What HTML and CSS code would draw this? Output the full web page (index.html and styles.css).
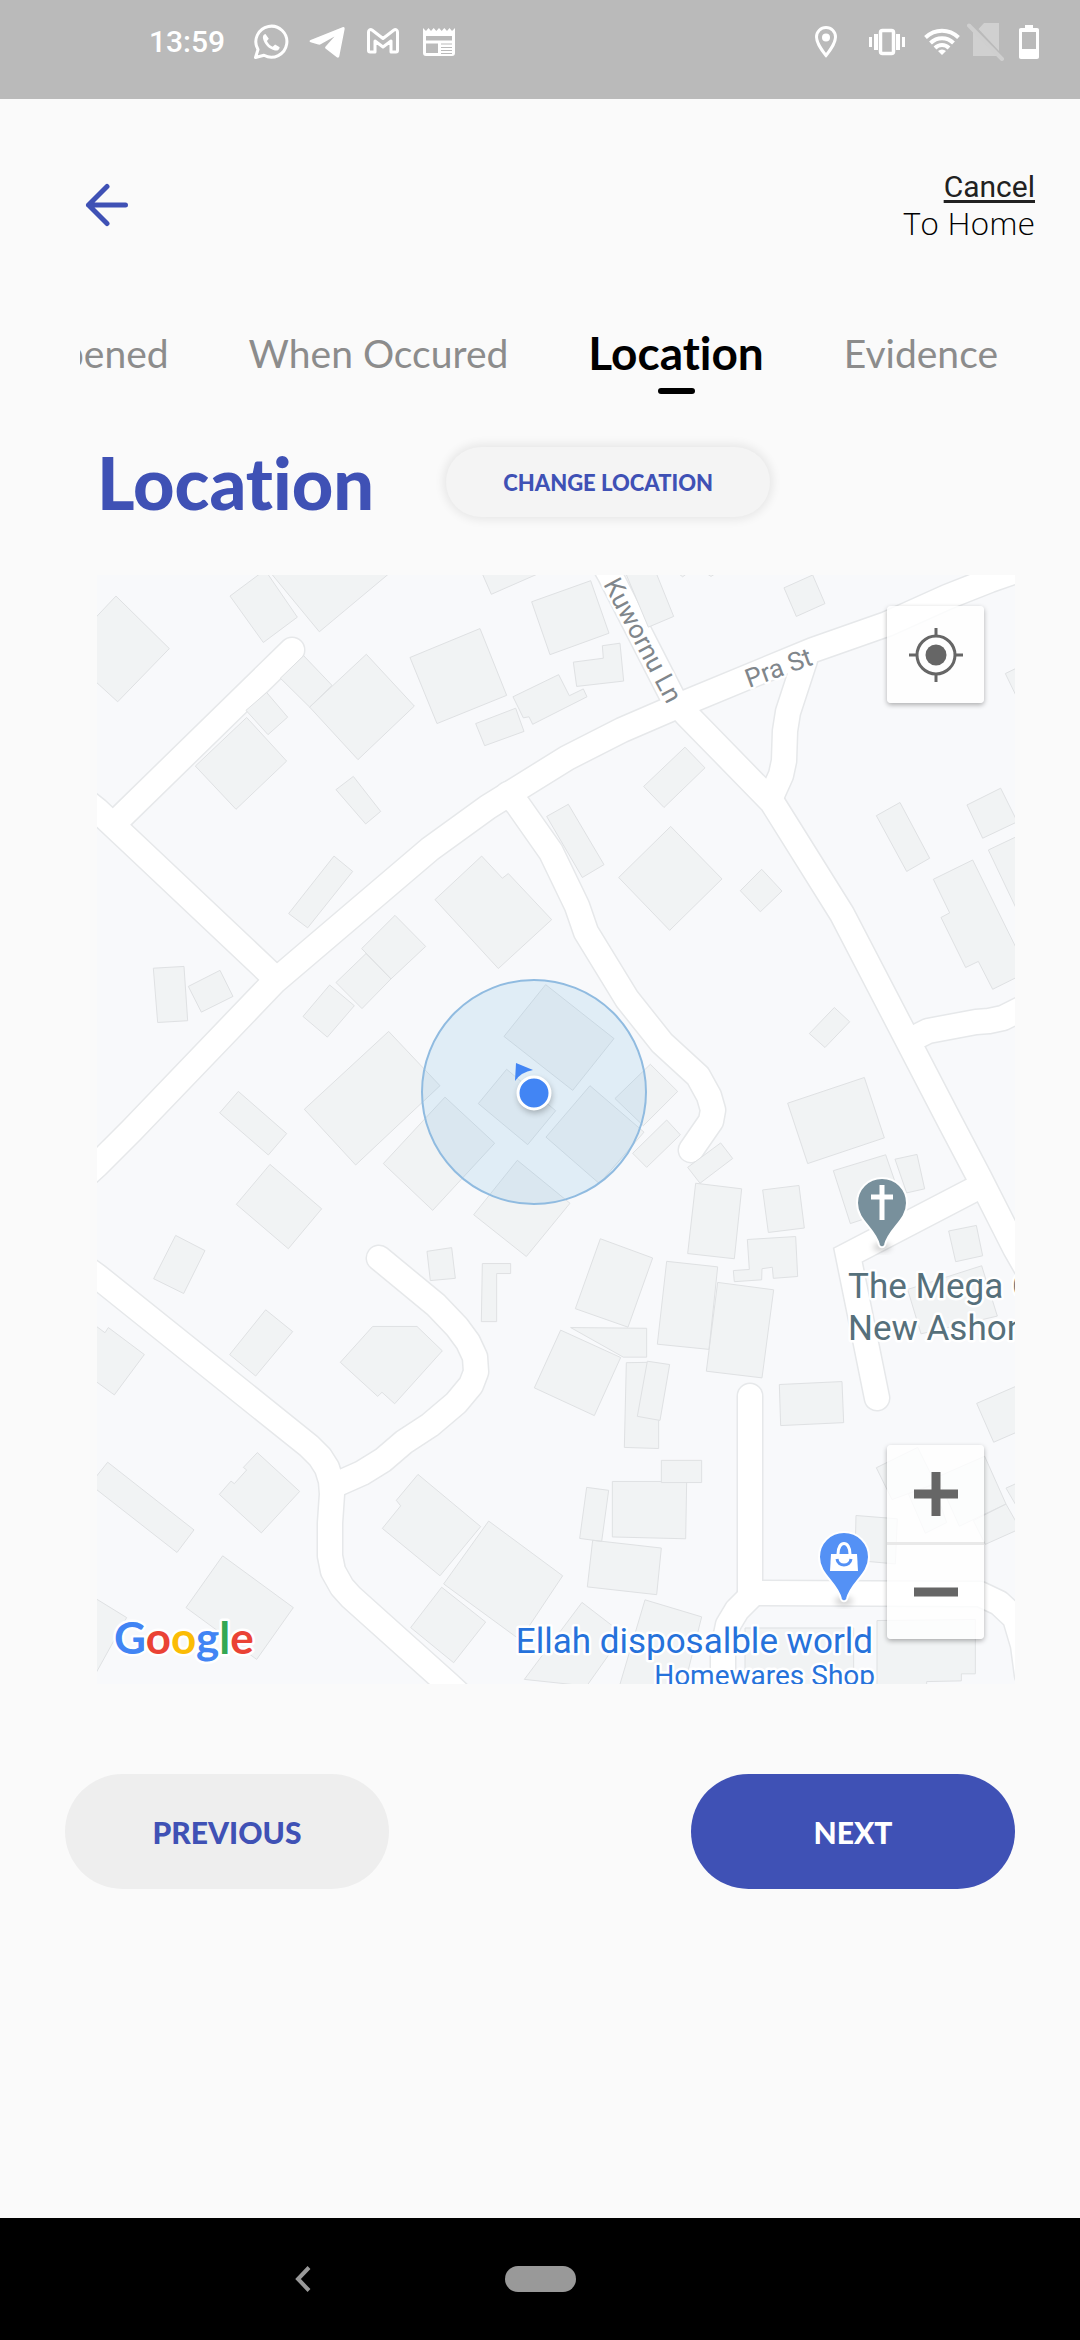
FILE: index.html
```html
<!DOCTYPE html>
<html lang="en">
<head>
<meta charset="utf-8">
<meta name="viewport" content="width=device-width, initial-scale=1">
<title>Location</title>
<link rel="stylesheet" href="styles.css">
</head>
<body>
<header class="status">
  <div class="status-group">
    <time class="clock">13:59</time>
    <svg class="status-icon" viewBox="0 0 36 36" width="36" height="36" fill="none" stroke="#fff" stroke-width="3">
      <path d="M2.500 33.500 5 25.500A15.500 15.500 0 1 1 11 31.300Z" stroke-linejoin="round"/>
      <path d="M12.500 10c-2 .5-3 2.300-2.500 4.500 1.500 6 6 10.500 12 12 2.500.5 4.300-.8 4.700-3.300l-4.600-2.600-2.400 2.200c-2.600-1.300-4.600-3.200-5.800-5.800l1.900-2.200Z" fill="#fff" stroke="none"/>
    </svg>
    <svg class="status-icon" viewBox="0 0 36 36" width="36" height="36" fill="#fff">
      <path d="M33.500 3.200 1.600 15.900c-1.400.6-1.400 1.800 0 2.300l7.600 2.300c1 .3 2 .1 2.900-.5L25.500 12.500 16.600 22.400c-.7.8-.7 1.600.2 2.300l11 8.600c1.200.9 2.200.4 2.500-1L35.600 5.200c.3-1.700-.6-2.600-2.100-2Z"/>
    </svg>
    <svg class="status-icon" viewBox="0 0 36 36" width="36" height="36" fill="none" stroke="#fff" stroke-width="3" stroke-linejoin="round">
      <path d="M3.500 8v18.500c0 .8.500 1.500 1.500 1.500h5V17l8 6 8-6v11h5c1 0 1.500-.7 1.500-1.500V8c0-2-2-3-3.500-2L18 14.500 7 6C5.500 5 3.500 6 3.500 8Z"/>
    </svg>
    <svg class="status-icon" viewBox="0 0 36 36" width="36" height="36" fill="#fff">
      <path fill-rule="evenodd" d="M2 4l3 3 2.500-3L10 7l2.700-3 2.600 3L18 4l2.700 3 2.600-3L26 7l2.500-3L31 7l3-3v25c0 2-1 3-3 3H5c-2 0-3-1-3-3ZM5 12v4.500h26V12ZM5 19.500V29h12v-9.500ZM20 19.500v1h11v-1ZM20 23v1h11v-1ZM20 26v1h11v-1ZM20 29v1h11v-1Z"/>
    </svg>
  </div>
  <div class="status-group status-right">
    <svg class="icon-pin" viewBox="0 0 22 32" width="22" height="32"><path d="M11 1.500c-5.300 0-9.500 4.200-9.500 9.500C1.500 18 11 29.500 11 29.500S20.500 18 20.500 11c0-5.300-4.200-9.500-9.500-9.500Z" fill="none" stroke="#fff" stroke-width="3"/><circle cx="11" cy="11.500" r="4" fill="#fff"/></svg>
    <svg class="icon-vibrate" viewBox="0 0 36 28" width="36" height="28" fill="#fff"><path d="M0 9h3v10H0ZM5 6h4v16H5ZM27 6h4v16h-4ZM33 9h3v10h-3Z"/><rect x="11.500" y="2.500" width="13" height="23" rx="2" fill="none" stroke="#fff" stroke-width="3.500"/></svg>
    <svg class="icon-wifi" viewBox="0 0 36 28" width="36" height="28" fill="none" stroke="#fff" stroke-width="4"><path d="M1.500 9.500c9.500-9 23.500-9 33 0M6.500 15c6.500-6.500 16.500-6.500 23 0M11 20c4-4 10-4 14 0"/><path d="M14 23c2.500-2 5.500-2 8 0l-4 4Z" fill="#fff" stroke="none"/></svg>
    <svg class="icon-sim" viewBox="0 0 38 38" width="38" height="38"><path d="M17 0h15v28L11.500 6ZM6 8l25 25H6Z" fill="#d0d0d0"/><path d="M2 2.500 35 36" stroke="#cfcfcf" stroke-width="4" stroke-linecap="round"/></svg>
    <svg class="icon-battery" viewBox="0 0 20 34" width="20" height="34"><path fill="#fff" fill-rule="evenodd" d="M6 0h8v3h4c1.300 0 2 .7 2 2v27c0 1.300-.7 2-2 2H2c-1.300 0-2-.7-2-2V5c0-1.300.7-2 2-2h4ZM3 7v17h14V7Z"/></svg>
  </div>
</header>

<main class="screen">
  <div class="topbar">
    <button class="back" type="button" aria-label="Back">
      <svg viewBox="0 0 44 44" width="44" height="44" fill="none" stroke="#3f51b5" stroke-width="5" stroke-linecap="round" stroke-linejoin="round"><path d="M22 3.500 3.500 22 22 40.500M3.500 22h37"/></svg>
    </button>
    <div class="cancel">
      <a class="cancel-link" href="#home">Cancel</a>
      <span class="cancel-note">To Home</span>
    </div>
  </div>

  <nav class="tabs" aria-label="Report steps">
    <a class="tab" href="#what">What Happened</a>
    <a class="tab" href="#when">When Occured</a>
    <a class="tab tab-active" href="#location" aria-current="step">Location</a>
    <a class="tab" href="#evidence">Evidence</a>
  </nav>

  <div class="title-row">
    <h1 class="title">Location</h1>
    <button class="change" type="button">CHANGE LOCATION</button>
  </div>

  <section class="map" aria-label="Map">
    <svg class="map-canvas" viewBox="0 0 918 1109">
      <defs>
        <filter id="soft" x="-50%" y="-50%" width="200%" height="200%"><feGaussianBlur stdDeviation="3"/></filter>
        <g id="roads">
          <path d="M-10 599 0 590 35 555 178 406 333 274 391 232 470 183 525 155 583 130 716 75 790 49 850 22 893 5 930-8"/>
          <path d="M-10 227 0 235 34 267 178 403"/>
          <path d="M195 75 25 241"/>
          <path d="M505-14 513 0 578 127 590 140 675 227 745 339 852 545 882 602 918 673 930 694"/>
          <path d="M708 85 691 137 688 156 687 186 684 200 675 220"/>
          <path d="M411 219 421 230 454 277 480 331 489 357 530 424 565 468 601 501 612 521 616 535 614 546 594 575"/>
          <path d="M823 460 831 456 879 447 892 446 906 443 918 437 930 431"/>
          <path d="M884 611 874 616 751 680 780 823" stroke-linejoin="miter"/>
          <path d="M-10 694 0 701 212 871 223 882 230 893 234 906 235 919 233 948 233 981 236 996 245 1012 254 1022 351 1109 365 1122"/>
          <path d="M282 683 339 730 360 752 371 767 378 782 379 797 374 810 359 828 333 850 307 867 286 885 265 898 238 910"/>
          <path d="M653 821 653 1022 640 1035 631 1050 626 1074 626 1120"/>
          <path d="M653 1018 883 1019 902 1028 918 1043 926 1070 930 1100"/>
        </g>
      </defs>
      <rect width="918" height="1109" fill="#f8f9fb"/>
      <use href="#roads" class="road-edge"/>
      <use href="#roads" class="road"/>

      <g class="buildings">
        <g transform="translate(-7 -5) scale(.33333 .35714)">
          <path d="M0 150 78 73 238 220 83 369 0 298ZM420 73 525 0 622 132 520 203ZM535 0 688 173 910 0ZM571 303 641 240 726 323 659 384ZM659 384 829 236 973 381 804 531ZM468 393 530 343 593 412 534 461ZM316 549 470 413 590 535 438 670ZM738 615 790 578 872 676 827 711ZM596 962 732 801 788 844 653 1002ZM960 245 1170 164 1250 351 1041 430ZM1172 0 1204 68 1370 0ZM1325 89 1502 30 1557 177 1380 237ZM1269 355 1406 293 1438 352 1480 333 1491 355 1328 432 1317 411 1300 414ZM1157 430 1277 387 1302 452 1184 492ZM1035 923 1175 801 1237 863 1255 850 1385 979 1225 1116ZM815 1060 915 967 1007 1054 903 1145ZM738 1155 828 1074 903 1145 816 1228ZM639 1250 719 1162 793 1220 712 1308ZM190 1115 282 1110 293 1262 203 1267ZM295 1166 390 1121 429 1194 334 1238ZM643 1510 896 1292 1050 1444 797 1666ZM389 1520 445 1460 590 1578 535 1638ZM1242 1306 1367 1161 1572 1312 1448 1457ZM1165 1494 1250 1398 1397 1514 1313 1609ZM880 1662 1065 1476 1214 1605 1028 1793ZM1500 1444 1662 1574 1528 1718 1368 1588Z"/>
        </g>
        <g transform="translate(443 -5) scale(.33333 .35714)">
          <path d="M225 1480 331 1384 413 1460 310 1556ZM253 0 325 160 401 130 345 0ZM732 50 818 14 855 94 769 130ZM100 258 190 247 187 212 240 205 251 311 110 326ZM1396 290 1440 270 1440 375ZM311 606 435 496 495 554 372 665ZM20 690 85 656 192 825 127 861ZM236 861 392 718 546 865 389 1009ZM601 898 665 838 726 899 661 957ZM1009 688 1080 651 1169 807 1100 844ZM1281 658 1382 611 1432 705 1328 751ZM1345 784 1440 742 1440 970ZM1180 866 1298 812 1440 1080 1440 1136 1358 1174 1315 1096 1277 1113 1203 973 1229 960ZM808 1298 883 1225 929 1265 855 1337ZM743 1493 973 1421 1033 1590 803 1662ZM418 12 428 19 438 12ZM503 12 513 18 523 12Z"/>
        </g>
        <g transform="translate(-7 545) scale(.33333 .36996)">
          <path d="M439 228 540 120 695 240 595 348ZM1151 256 1282 109 1440 225 1309 369ZM191 429 257 312 345 353 281 469ZM1011 355 1085 345 1096 428 1021 434ZM1177 388H1262V415H1220V545H1174ZM0 545 45 575 55 561 163 634 73 743 0 695ZM419 634 527 513 608 572 497 692ZM751 655 848 558H981L1057 624 914 767 876 736 863 747ZM0 985 53 925 312 1108 261 1169ZM388 1012 423 976 433 983 470 946 460 939 502 899 629 1004 514 1116ZM288 1318 398 1178 610 1318 500 1458ZM0 1284 110 1345 21 1490 0 1520ZM877 1104 932 1043 919 1028 984 958 1172 1099 1050 1232ZM1061 1254 1196 1084 1418 1232 1290 1405ZM962 1372 1055 1263 1187 1357 1091 1467Z"/>
        </g>
        <g transform="translate(443 545) scale(.33333 .36996)">
          <path d="M278 90 380 0 421 40 320 128ZM443 128 542 62 578 104 480 171ZM467 171 605 186 583 375 443 361ZM668 189 777 177 793 292 685 304ZM622 323 767 315 773 423 700 428 697 398 666 402 665 432 583 437 580 407 628 404ZM181 321 338 373 264 560 106 510ZM380 382 533 397 507 620 352 606ZM533 439 701 459 666 697 499 679ZM92 561 320 563V641H250ZM62 568 242 642 163 799-17 724ZM259 656 325 655 356 812V888L253 885ZM718 715 906 707 911 818 722 826ZM880 137 1037 94 1090 232 931 280ZM1065 106 1131 93 1154 186 1100 197ZM1226 300 1309 285 1328 367 1247 383ZM1103 458 1325 394 1372 530 1143 578ZM1310 766 1440 715V840L1361 871ZM217 977H440L437 1132 217 1127ZM140 993 206 1001 185 1139 119 1131ZM158 1136 364 1157 350 1283 142 1262ZM948 1069 1072 1078 1066 1200 945 1190ZM1009 940 1133 885 1187 983 1056 1026ZM1105 1010 1180 985 1220 1088 1156 1117ZM1192 965 1334 909 1398 1038 1258 1098ZM1300 1083 1398 1038 1440 1105 1336 1147ZM1398 995 1440 978V1060ZM315 1297 485 1343 430 1540H235ZM126 1304 250 1390 140 1530-47 1512ZM615 1373H941V1540H615ZM1011 1353 1306 1350V1497H1264V1516L1160 1518V1540H1011Z"/>
          <path d="M322 652 389 661 360 812 292 801ZM364 920H485V980H364Z"/>
        </g>
      </g>

      <circle class="accuracy" cx="437" cy="517" r="112"/>
      <circle cx="438" cy="521" r="17" fill="#000" opacity=".25" filter="url(#soft)"/>
      <path d="M419 488 436 495Q424 497 418 506Z" fill="#4285f4"/>
      <circle cx="437" cy="518" r="16" fill="#4285f4" stroke="#fff" stroke-width="3"/>

      <g class="street">
        <text transform="translate(506 9) rotate(62)">Kuwornu Ln</text>
        <text transform="translate(652 113) rotate(-20)">Pra St</text>
      </g>

      <ellipse cx="785" cy="672" rx="9" ry="4" fill="#000" opacity=".2" filter="url(#soft)"/>
      <path class="pin" d="M785 603c-14 0-25 11-25 25 0 18 18 25 22 42 1 3 5 3 6 0 4-17 22-24 22-42 0-14-11-25-25-25Z" fill="#78909c"/>
      <path d="M785 610v35M774 622h22" stroke="#fff" stroke-width="5"/>
      <text class="place place-church" x="751" y="723">The Mega C</text>
      <text class="place place-church" x="751" y="765">New Ashon</text>

      <ellipse cx="747" cy="1026" rx="9" ry="4" fill="#000" opacity=".2" filter="url(#soft)"/>
      <path class="pin" d="M747 957c-14 0-25 11-25 25 0 18 18 25 22 42 1 3 5 3 6 0 4-17 22-24 22-42 0-14-11-25-25-25Z" fill="#5491f5"/>
      <path d="M734 979h26l1 17h-28Z" fill="#fff"/>
      <path d="M741 979c0-14 12-14 12 0" fill="none" stroke="#fff" stroke-width="3"/>
      <path d="M740 984c1 8 13 8 14 0" fill="none" stroke="#5491f5" stroke-width="3"/>
      <text class="place place-shop" x="776" y="1078">Ellah disposalble world</text>
      <text class="place place-shop place-kind" x="778" y="1110">Homewares Shop</text>

      <text class="brand" x="17" y="1079"><tspan fill="#4285f4">G</tspan><tspan fill="#ea4335">o</tspan><tspan fill="#fbbc05">o</tspan><tspan fill="#4285f4">g</tspan><tspan fill="#34a853">l</tspan><tspan fill="#ea4335">e</tspan></text>
    </svg>
    <button class="map-button locate" type="button" aria-label="My location">
      <svg viewBox="0 0 56 56" width="56" height="56" fill="none" stroke="#666" stroke-width="3"><circle cx="28" cy="28" r="19"/><circle cx="28" cy="28" r="10.500" fill="#666" stroke="none"/><path d="M28 1v8M28 47v8M1 28h8M47 28h8"/></svg>
    </button>
    <div class="zoom">
      <button class="map-button" type="button" aria-label="Zoom in"><svg viewBox="0 0 44 44" width="44" height="44" stroke="#666" stroke-width="9"><path d="M22 0v44M0 22h44"/></svg></button>
      <button class="map-button" type="button" aria-label="Zoom out"><svg viewBox="0 0 44 44" width="44" height="44" stroke="#666" stroke-width="9"><path d="M0 22h44"/></svg></button>
    </div>
  </section>

  <div class="actions">
    <button class="action action-previous" type="button">PREVIOUS</button>
    <button class="action action-next" type="button">NEXT</button>
  </div>
</main>

<footer class="navbar">
  <button class="nav-back" type="button" aria-label="System back"><svg viewBox="0 0 16 26" width="16" height="26" fill="none" stroke="#999" stroke-width="4"><path d="M14 1.500 3 13l11 11.500"/></svg></button>
  <button class="nav-home" type="button" aria-label="System home"></button>
</footer>
</body>
</html>
```
FILE: styles.css
```css
* {
  box-sizing: border-box;
}

body {
  margin: 0;
  min-height: 100vh;
  display: flex;
  flex-direction: column;
  background: #fafafa;
  font-family: Roboto, sans-serif;
  font-variant-ligatures: none;
  color: #000;
}

button {
  border: 0;
  padding: 0;
  background: none;
  font: inherit;
  cursor: pointer;
}

svg {
  display: block;
}

/* system status bar */
.status {
  display: flex;
  justify-content: space-between;
  height: 99px;
  padding: 0 41px 15px 149px;
  background: #bababa;
}

.status-group {
  display: flex;
  align-items: center;
  gap: 20px;
}

.status-right {
  gap: 0;
}

.clock {
  margin-right: 8px;
  font-size: 30px;
  font-weight: 500;
  line-height: 36px;
  color: #fff;
}

.icon-vibrate {
  margin-left: 32px;
}

.icon-wifi {
  margin-left: 19px;
}

.icon-sim {
  margin-left: 7px;
}

.icon-battery {
  margin-left: 14px;
}

/* app screen */
.screen {
  flex: 1;
  display: flex;
  flex-direction: column;
}

.topbar {
  display: flex;
  justify-content: space-between;
  align-items: center;
  margin-top: 70px;
  padding: 0 45px 0 85px;
}

.cancel {
  display: flex;
  flex-direction: column;
  align-items: flex-end;
}

.cancel-link {
  font-size: 30px;
  line-height: 36px;
  color: #212121;
  text-underline-offset: 3px;
}

.cancel-note {
  font-family: "Open Sans", sans-serif;
  font-size: 32px;
  font-weight: 300;
  line-height: 36px;
}

.tabs {
  display: flex;
  justify-content: flex-end;
  gap: 80px;
  margin: 76px 0 0 80px;
  padding-right: 82px;
  overflow: hidden;
  white-space: nowrap;
}

.tab {
  position: relative;
  flex: none;
  height: 77px;
  font-family: Lato, sans-serif;
  font-size: 39px;
  line-height: 72px;
  color: #8c8c8c;
  text-decoration: none;
}

.tab-active {
  font-size: 46px;
  font-weight: 700;
  color: #000;
}

.tab-active::after {
  content: "";
  position: absolute;
  left: 50%;
  bottom: 0;
  width: 37px;
  height: 6px;
  margin-left: -18px;
  border-radius: 3px;
  background: #000;
}

.title-row {
  display: flex;
  align-items: center;
  gap: 72px;
  margin-top: 46px;
  padding-left: 97px;
}

.title {
  margin: 0;
  font-family: Lato, sans-serif;
  font-size: 72px;
  font-weight: 900;
  line-height: 84px;
  color: #3f51b5;
}

.change {
  width: 324px;
  height: 70px;
  border-radius: 35px;
  background: #f4f4f4;
  box-shadow: 0 0 10px 3px rgba(0, 0, 0, .08);
  font-family: Lato, sans-serif;
  font-size: 22px;
  font-weight: 900;
  color: #3f51b5;
}

/* map */
.map {
  position: relative;
  margin: 51px 65px 0 97px;
}

.map-canvas {
  width: 100%;
  height: auto;
  overflow: hidden;
}

.road-edge,
.road {
  fill: none;
  stroke-linecap: round;
  stroke-linejoin: round;
}

.road-edge {
  stroke: #e6e8ea;
  stroke-width: 27px;
}

.road {
  stroke: #fff;
  stroke-width: 24px;
}

.buildings path {
  fill: #f1f3f4;
  stroke: #dfe1e3;
  stroke-width: 1px;
  vector-effect: non-scaling-stroke;
}

.accuracy {
  fill: rgba(88, 169, 224, .15);
  stroke: #90bbe0;
  stroke-width: 2px;
}

.street,
.place,
.brand {
  stroke: #fff;
  stroke-width: 5px;
  stroke-linejoin: round;
  paint-order: stroke;
}

.street {
  font-size: 26px;
  fill: #80868b;
}

.pin {
  stroke: #fff;
  stroke-width: 2px;
}

.place {
  font-size: 35px;
}

.place-church {
  fill: #56707b;
}

.place-shop {
  fill: #2672db;
  text-anchor: end;
}

.place-kind {
  font-size: 28px;
}

.brand {
  font-family: Lato, sans-serif;
  font-size: 44px;
  font-weight: 700;
}

.locate,
.zoom {
  position: absolute;
  right: 31px;
  width: 97px;
  border-radius: 4px;
  background: rgba(255, 255, 255, .8);
  box-shadow: 0 2px 5px rgba(0, 0, 0, .3);
}

.locate {
  top: 31px;
}

.zoom {
  bottom: 45px;
}

.map-button {
  display: flex;
  align-items: center;
  justify-content: center;
  width: 97px;
  height: 97px;
}

.map-button + .map-button {
  border-top: 3px solid #e9e9e9;
}

/* step buttons */
.actions {
  display: flex;
  justify-content: space-between;
  margin: 90px 65px 60px;
}

.action {
  width: 324px;
  height: 115px;
  border-radius: 58px;
  font-family: Lato, sans-serif;
  font-size: 30px;
  font-weight: 900;
}

.action-previous {
  background: #eee;
  color: #3f51b5;
}

.action-next {
  background: #3f51b5;
  color: #fff;
}

/* system navigation */
.navbar {
  display: grid;
  grid-template-columns: 1fr 71px 1fr;
  align-items: center;
  height: 122px;
  background: #000;
}

.nav-back {
  justify-self: end;
  margin-right: 194px;
}

.nav-home {
  height: 26px;
  border-radius: 13px;
  background: #999;
}
```
